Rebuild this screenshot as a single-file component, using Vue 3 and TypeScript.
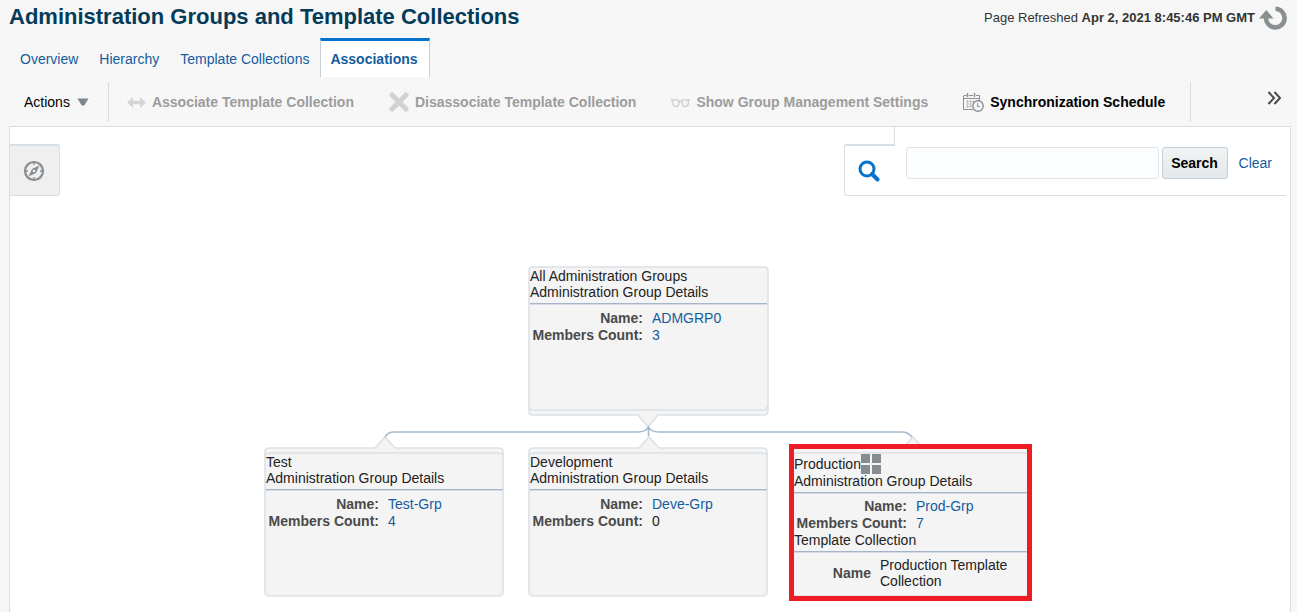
<script setup lang="ts">
import { ref } from 'vue'

interface Detail {
  label: string
  value: string
  link: boolean
}
interface GroupNode {
  id: string
  title: string
  details: Detail[]
  template?: string
}

const query = ref('')
const tabs = ['Overview', 'Hierarchy', 'Template Collections', 'Associations']
const activeTab = ref('Associations')

const group = (id: string, title: string, name: string, count: string, linked = true, template?: string): GroupNode => ({
  id,
  title,
  details: [
    { label: 'Name:', value: name, link: true },
    { label: 'Members Count:', value: count, link: linked },
  ],
  template,
})

const nodes: GroupNode[] = [
  group('root', 'All Administration Groups', 'ADMGRP0', '3'),
  group('test', 'Test', 'Test-Grp', '4'),
  group('dev', 'Development', 'Deve-Grp', '0', false),
  group('prod', 'Production', 'Prod-Grp', '7', true, 'Production Template Collection'),
]
</script>

<template>
  <div class="page">
    <header class="header">
      <h1>Administration Groups and Template Collections</h1>
      <div class="refreshed">
        <span>Page Refreshed <b>Apr 2, 2021 8:45:46 PM GMT</b></span>
        <button class="plain" type="button" aria-label="Refresh">
          <svg width="28" height="24" viewBox="0 0 28 24">
            <path d="M16.500 2.800A9.300 9.300 0 1 1 7 11.500" fill="none" stroke="#8a8f92" stroke-width="4.600" />
            <path d="M0 12.500L7.300 4l7.200 8.500z" fill="#8a8f92" />
          </svg>
        </button>
      </div>
    </header>

    <nav class="tabs">
      <a v-for="tab in tabs" :key="tab" href="#" :class="{ active: tab === activeTab }" @click.prevent="activeTab = tab">{{ tab }}</a>
    </nav>

    <div class="toolbar" role="toolbar">
      <button class="plain actions" type="button">
        Actions
        <svg width="12" height="8" viewBox="0 0 12 8"><path d="M.5.5h11L7.300 7.500H4.700z" fill="#7f868b" /></svg>
      </button>
      <span class="divider"></span>
      <div class="tools">
        <button class="plain tool" type="button" disabled>
          <svg width="19" height="20" viewBox="0 0 19 20">
            <path d="M0 10.500L6 5v3.700h7V5l6 5.500L13 16v-3.700H6V16z" fill="#d3d5d6" />
          </svg>
          Associate Template Collection
        </button>
        <button class="plain tool" type="button" disabled>
          <svg width="20" height="20" viewBox="0 0 20 20">
            <path d="M3 3l14 14M17 3L3 17" stroke="#d0d2d3" stroke-width="5" stroke-linecap="round" />
          </svg>
          Disassociate Template Collection
        </button>
        <button class="plain tool" type="button" disabled>
          <svg width="19" height="20" viewBox="0 0 19 20">
            <g fill="none" stroke="#d0d2d3" stroke-width="1.600">
              <path d="M1.500 8h5q1.500 0 1.500 2.200c0 3-1.300 4.300-3.200 4.300S1.500 13 1.500 10zM17.500 8h-5Q11 8 11 10.200c0 3 1.300 4.300 3.200 4.300s3.300-1.500 3.300-4.500z" />
              <path d="M0 8h2M17 8h2M8 9.500q1.500-1 3 0" />
            </g>
          </svg>
          Show Group Management Settings
        </button>
        <button class="plain tool" type="button">
          <svg width="21" height="20" viewBox="0 0 21 20">
            <g fill="none" stroke="#8b9093">
              <path d="M.5 4v13.500H10M.5 3.500h3M6 3.500h4M13 3.500h3.500V9M1 6.500h15" />
              <path d="M4.500 1v4M11.500 1v4" stroke-width="1.500" />
              <path d="M3 9.500h10M3 12h8M3 14.500h7M4.500 8v8M7.500 8v8M10.500 8v3" stroke="#c3c6c8" />
              <circle cx="15" cy="14" r="5.200" fill="#f6f6f6" stroke-width="1.400" />
              <path d="M14.500 11v3.500H17" />
            </g>
          </svg>
          Synchronization Schedule
        </button>
      </div>
      <span class="divider"></span>
      <button class="plain more" type="button" aria-label="More tools">
        <svg width="15" height="14" viewBox="0 0 15 14">
          <path d="M1.500 1L7 7l-5.500 6M7.500 1L13 7l-5.500 6" fill="none" stroke="#4b4b4b" stroke-width="2" />
        </svg>
      </button>
    </div>

    <main class="panel">
      <div class="overlay">
        <button class="plain compass" type="button" aria-label="Control panel">
          <svg width="22" height="22" viewBox="0 0 22 22">
            <circle cx="11" cy="11" r="9" fill="none" stroke="#868c90" stroke-width="2.200" />
            <path d="M11 3v2M11 17v2M3 11h2M17 11h2" stroke="#868c90" stroke-width="1.300" />
            <path d="M16.500 5.500L13 13l-7.500 3.500L9 9z" fill="#868c90" />
            <circle cx="11" cy="11" r="1.300" fill="#efefef" />
          </svg>
        </button>
        <form class="search" @submit.prevent>
          <span class="search-tab">
            <svg width="22" height="22" viewBox="0 0 22 22">
              <circle cx="9" cy="9" r="7" fill="none" stroke="#0572ce" stroke-width="3" />
              <path d="M14 14l5.500 5.500" stroke="#0572ce" stroke-width="4" stroke-linecap="round" />
            </svg>
          </span>
          <div class="search-body">
            <input v-model="query" type="text" aria-label="Search groups" />
            <button class="submit" type="submit">Search</button>
            <a href="#" @click.prevent="query = ''">Clear</a>
          </div>
        </form>
      </div>

      <div class="stage">
        <svg class="links" width="768" height="408" viewBox="0 0 768 408">
          <g fill="#f4f4f4" stroke="#dce1e5" stroke-width="1.600">
            <path d="M268 71h232q4 0 4 4v140q0 4-4 4H394l-10 12-10-12H268q-3 0-3-4V75q0-4 3-4z" />
            <path d="M265 210q0 4 4 4h230q4 0 4-4" />
            <g v-for="x in [0, 264, 528]" :key="x" :transform="`translate(${x} 0)`">
              <path d="M5 252h106l10-11 10 11h104q4 0 4 4v140q0 4-4 4H5q-4 0-4-4V256q0-4 4-4z" />
              <path d="M1 261q0-4 4-4h230q4 0 4 4" />
            </g>
          </g>
          <path d="M121 241q3-5 9-5h244q8 0 10.500-5 2.500 5 10.500 5h243q6 0 10 5M384.500 231v9" fill="none" stroke="#a6bace" stroke-width="1.600" />
        </svg>

        <article v-for="node in nodes" :key="node.id" :class="['node', node.id]">
          <div class="name">
            {{ node.title }}<svg v-if="node.template" width="20" height="20" viewBox="0 0 20 20">
              <path d="M0 0h9v9H0zM11 0h9v9h-9zM0 11h9v9H0zM11 11h9v9h-9z" fill="#878c90" />
            </svg>
          </div>
          <h2>Administration Group Details</h2>
          <dl>
            <template v-for="d in node.details" :key="d.label">
              <dt>{{ d.label }}</dt>
              <dd><a v-if="d.link" href="#">{{ d.value }}</a><template v-else>{{ d.value }}</template></dd>
            </template>
          </dl>
          <template v-if="node.template">
            <h2>Template Collection</h2>
            <dl class="collection">
              <dt>Name</dt>
              <dd>{{ node.template }}</dd>
            </dl>
          </template>
        </article>
      </div>
    </main>
  </div>
</template>

<style>
body {
  margin: 0;
}
</style>

<style scoped>
.page {
  box-sizing: border-box;
  min-height: 100vh;
  display: flex;
  flex-direction: column;
  padding: 0 6px 0 9px;
  overflow: hidden;
  background: linear-gradient(45deg, #f4f4f4 25%, #f9f9f9 25% 50%, #f4f4f4 50% 75%, #f9f9f9 75%) 0 0 / 4px 4px;
  color: #222;
  font: 14px/16px "Liberation Sans", Arial, sans-serif;
}
svg {
  display: block;
  flex: none;
}
a {
  color: #145c9e;
  text-decoration: none;
}
.plain {
  border: 0;
  padding: 0;
  background: none;
  font: inherit;
  color: inherit;
}
.header {
  display: flex;
  justify-content: space-between;
  height: 38px;
}
h1 {
  margin: 4px 0 0;
  font-size: 22px;
  line-height: 26px;
  color: #043b59;
}
.refreshed {
  display: flex;
  align-items: center;
  gap: 4px;
  height: 36px;
  padding-right: 4px;
  font-size: 13px;
  color: #333;
}
.tabs {
  display: flex;
  gap: 1px;
  height: 39px;
  padding-left: 1px;
}
.tabs a {
  box-sizing: border-box;
  border: 1px solid transparent;
  border-width: 3px 1px 0;
  padding: 10px 9px 0;
}
.tabs a.active {
  border-color: #0572ce #c4ced7 transparent;
  padding-right: 11px;
  background: #fff;
  font-weight: bold;
}
.toolbar {
  display: flex;
  align-items: center;
  height: 40px;
  margin: 5px 0 4px;
}
.actions {
  display: flex;
  align-items: center;
  gap: 7px;
  padding: 0 19px 0 15px;
  color: #000;
}
.divider {
  width: 1px;
  height: 40px;
  background: #d6dfe6;
}
.tools {
  display: flex;
  gap: 35px;
  padding: 0 25px 0 18px;
}
.tool {
  display: flex;
  align-items: center;
  gap: 6px;
  font-weight: bold;
  color: #000;
  white-space: nowrap;
}
.tool:disabled {
  color: #9c9c9c;
}
.more {
  margin: 0 9px 8px auto;
}
.panel {
  flex: 1;
  display: flex;
  flex-direction: column;
  border: 1px solid #d6dfe6;
  border-bottom: 0;
  padding-right: 4px;
  background: #fff;
}
.overlay {
  display: flex;
  justify-content: space-between;
  align-items: flex-end;
}
.compass {
  box-sizing: border-box;
  width: 50px;
  height: 52px;
  display: grid;
  place-items: center;
  border: 1px solid #d6dfe6;
  border-width: 2px 1px 1px 0;
  border-radius: 0 3px 3px 0;
  padding-right: 2px;
  background: #efefef;
}
.search {
  display: flex;
  align-items: flex-end;
}
.search-tab {
  box-sizing: border-box;
  width: 50px;
  height: 52px;
  display: grid;
  place-items: center;
  border: 1px solid #d6dfe6;
  border-width: 2px 0 1px 1px;
  border-radius: 3px 0 0 3px;
}
.search-body {
  box-sizing: border-box;
  display: flex;
  align-items: center;
  height: 69px;
  padding: 4px 14px 0 12px;
  border-bottom: 1px solid #d6dfe6;
  position: relative;
}
.search-body::before {
  content: "";
  position: absolute;
  top: 0;
  left: 0;
  width: 1px;
  height: 19px;
  background: #d6dfe6;
}
.search input {
  box-sizing: border-box;
  width: 253px;
  height: 32px;
  border: 1px solid #dfe4e7;
  border-radius: 3px;
  padding: 0 6px;
  background: #fcfdfe;
  font: inherit;
}
.submit {
  box-sizing: border-box;
  width: 66px;
  height: 32px;
  margin: 0 11px 0 3px;
  border: 1px solid #c4ced7;
  border-radius: 3px;
  padding: 0;
  background: linear-gradient(#f1f3f4, #e4e8ea);
  font: inherit;
  font-weight: bold;
  color: #000;
}
.stage {
  flex: 1 0 408px;
  width: 768px;
  margin: 0 auto;
  position: relative;
}
.links {
  position: absolute;
  top: 0;
  left: 0;
}
.node {
  box-sizing: border-box;
  position: absolute;
  width: 237px;
}
.root {
  left: 266px;
  top: 72px;
}
.test {
  left: 2px;
  top: 258px;
}
.dev {
  left: 266px;
  top: 258px;
}
.prod {
  left: 525px;
  top: 248px;
  width: 243px;
  height: 157px;
  border: 5px solid #ee1c25;
  padding-top: 5px;
}
.name {
  display: flex;
  align-items: center;
}
.prod .name {
  height: 19px;
}
h2 {
  margin: 0 0 1px;
  padding-bottom: 3px;
  border-bottom: 1px solid #a5b6ca;
  box-shadow: 0 1px #d3dce6;
  font: inherit;
}
dl {
  display: grid;
  grid-template-columns: 113px 1fr;
  column-gap: 9px;
  margin: 0;
  padding-top: 5px;
  line-height: 17px;
}
.prod dl {
  padding-top: 4px;
}
dt {
  text-align: right;
  font-weight: bold;
  color: #4a4a4a;
  white-space: nowrap;
}
dd {
  margin: 0;
}
.prod .collection {
  grid-template-columns: 77px 1fr;
  align-items: center;
  line-height: 16px;
}
</style>
